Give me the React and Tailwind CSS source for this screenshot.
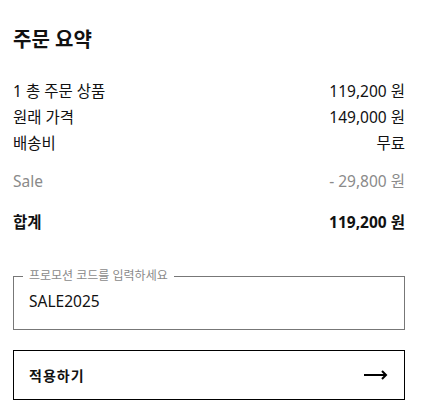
import React from 'react';

const rows = [
    { label: '1 총 주문 상품', value: '119,200 원' },
    { label: '원래 가격', value: '149,000 원' },
    { label: '배송비', value: '무료' },
];

const font = { fontFamily: '"Noto Sans", "Noto Sans CJK KR", sans-serif' };

const App = () => {
    return (
        <div className="bg-white w-[434px] min-h-[414px] pl-[13px] pr-[29px] pt-[26px] text-[#111]" style={font}>
            <h2 className="text-[20px] font-bold leading-[28px]">주문 요약</h2>

            <div className="mt-[24px] flex flex-col">
                {rows.map((r) => (
                    <div key={r.label} className="flex justify-between text-[15.5px] leading-[26px]">
                        <span>{r.label}</span>
                        <span>{r.value}</span>
                    </div>
                ))}
            </div>

            <div className="mt-[12px] flex justify-between text-[15.5px] leading-[26px] text-[#8a8a8a]">
                <span>Sale</span>
                <span>- 29,800 원</span>
            </div>

            <div className="mt-[15px] flex justify-between text-[15.5px] leading-[26px] font-bold">
                <span>합계</span>
                <span>119,200 원</span>
            </div>

            <div className="relative mt-[41px] h-[54px] border border-[#777] flex items-center px-[15px]">
                <span className="absolute -top-[9px] left-[9px] bg-white px-[6px] text-[12px] leading-[16px] text-[#8a8a8a]">
                    프로모션 코드를 입력하세요
                </span>
                <span className="text-[15.5px] pb-[2px]">SALE2025</span>
            </div>

            <button className="mt-[20px] w-full h-[50px] border border-black flex items-center justify-between pl-[15px] pr-[16px]">
                <span className="text-[14px] font-bold tracking-[1px]">적용하기</span>
                <svg width="24" height="12" viewBox="0 0 24 12" fill="none" stroke="black" strokeWidth="2">
                    <path d="M0 6 H22" />
                    <path d="M18 2 L22 6 L18 10" />
                </svg>
            </button>
        </div>
    );
};

export default App;
